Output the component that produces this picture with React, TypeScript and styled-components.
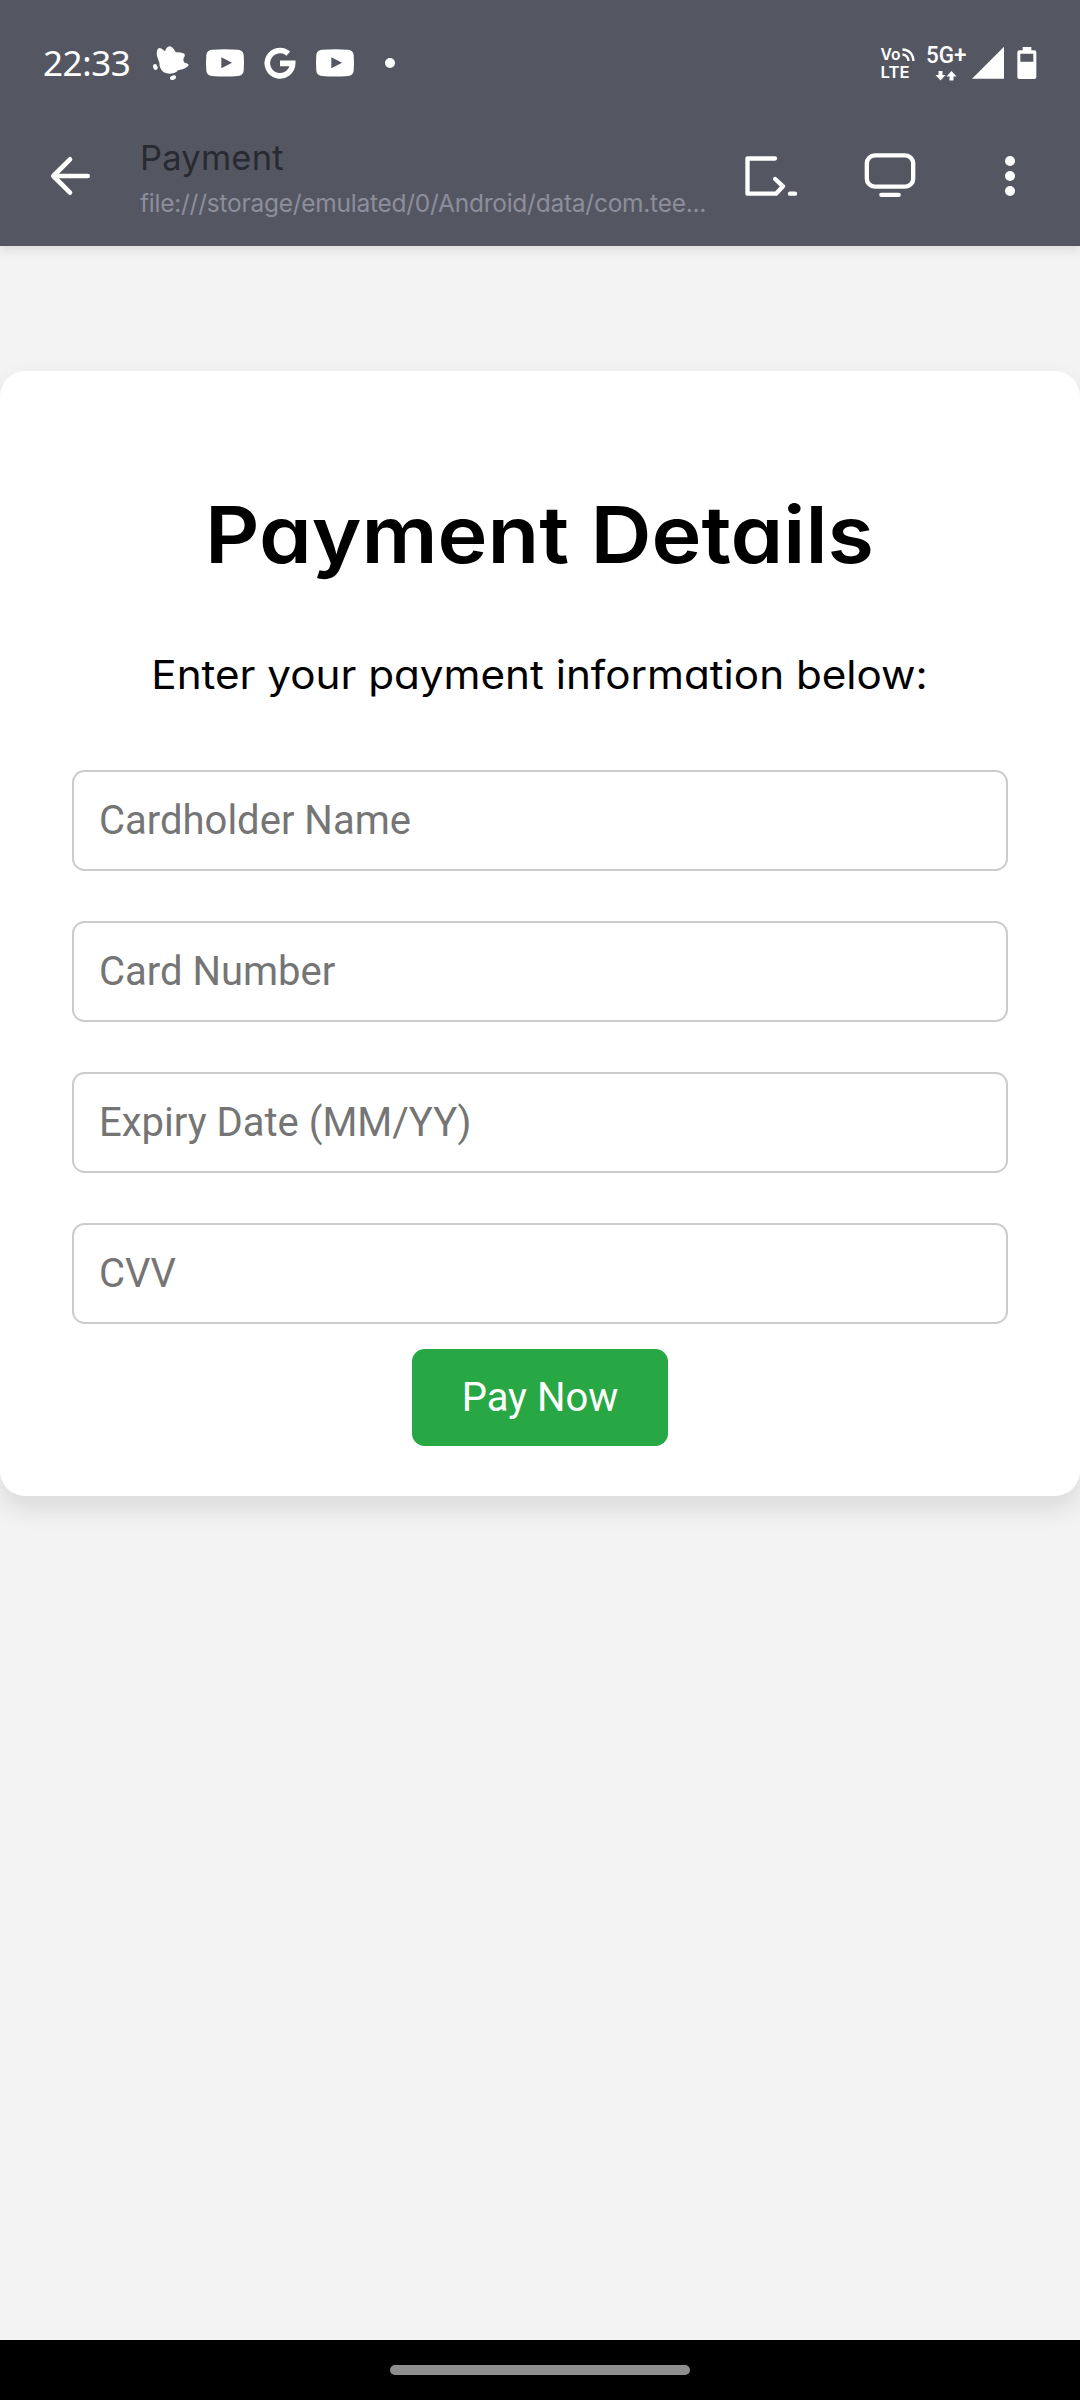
import React from "react";
import styled, { createGlobalStyle } from "styled-components";

const GlobalStyle = createGlobalStyle`
  * { box-sizing: border-box; }
  body { margin: 0; background: #f3f3f3; }
`;

const Screen = styled.div`
  width: 1080px;
  height: 2400px;
  display: flex;
  flex-direction: column;
  background: #f3f3f3;
  overflow: hidden;
`;

const Header = styled.header`
  height: 246px;
  flex: none;
  background: #545762;
  color: #fff;
  box-shadow: 0 2px 12px rgba(0, 0, 0, 0.13);
`;

const StatusBar = styled.div`
  height: 126px;
  display: flex;
  justify-content: space-between;
  align-items: center;
  padding: 0 43px 0 43px;
`;

const StatusGroup = styled.div<{ $gap: number }>`
  display: flex;
  align-items: center;
  gap: ${(p) => p.$gap}px;
`;

const Clock = styled.span`
  width: 90px;
  font: 400 35px/40px "Noto Sans", sans-serif;
  letter-spacing: -0.4px;
  white-space: nowrap;
`;

const Glyph = styled.svg`
  display: block;
  flex: none;
  overflow: visible;
  fill: currentColor;
`;

const LineGlyph = styled(Glyph)`
  fill: none;
  stroke: currentColor;
  stroke-linecap: round;
  stroke-linejoin: round;
`;

const Toolbar = styled.div`
  height: 120px;
  display: flex;
  align-items: center;
  padding: 0 10px 20px 51px;
`;

const IconButton = styled.button`
  display: flex;
  justify-content: center;
  padding: 0;
  border: 0;
  background: none;
  color: #fff;
`;

const PageInfo = styled.div`
  width: 570px;
  height: 100px;
  margin-left: 50px;
  padding-top: 9px;
  font-family: Inter, sans-serif;
  white-space: nowrap;
`;

const PageTitle = styled.div`
  font-size: 34.5px;
  line-height: 46px;
  letter-spacing: 0.2px;
  color: #282a31;
`;

const PageUrl = styled.div`
  font-size: 24.5px;
  line-height: 44px;
  letter-spacing: -0.25px;
  color: #8d8e9b;
`;

const Actions = styled.div`
  flex: 1;
  display: grid;
  grid-template-columns: repeat(3, 1fr);
  align-items: center;
`;

const Content = styled.main`
  flex: 1;
  padding-top: 125px;
`;

const Card = styled.form`
  height: 1125px;
  padding: 103px 72px 50px;
  display: flex;
  flex-direction: column;
  align-items: center;
  background: #fff;
  border-radius: 25px;
  box-shadow: 0 12.5px 25px rgba(0, 0, 0, 0.1);
`;

const Heading = styled.h1`
  margin: 0 0 51px;
  font: 600 79px/120px Inter, sans-serif;
  font-feature-settings: "cv11";
  color: #000;
  white-space: nowrap;
  transform: scaleX(1.07);
`;

const Lead = styled.p`
  margin: 0 0 65px;
  font: 400 39.5px/60px Inter, sans-serif;
  font-feature-settings: "cv11";
  color: #000;
  white-space: nowrap;
  transform: scaleX(1.068);
`;

const Fields = styled.div`
  width: 100%;
  display: grid;
  gap: 50px;
`;

const Field = styled.input`
  width: 100%;
  height: 101px;
  padding: 0 25px;
  border: 2px solid #ccc;
  border-radius: 12.5px;
  background: #fff;
  font: 400 40px Roboto, sans-serif;
  &::placeholder {
    color: #757575;
    opacity: 1;
  }
`;

const PayButton = styled.button`
  width: 256px;
  height: 97px;
  margin-top: 25px;
  padding: 0;
  border: 0;
  border-radius: 12.5px;
  background: #28a745;
  color: #fff;
  font: 400 40px Roboto, sans-serif;
`;

const NavBar = styled.footer`
  height: 60px;
  display: flex;
  align-items: center;
  justify-content: center;
  background: #000;
`;

const NavHandle = styled.div`
  width: 300px;
  height: 10px;
  border-radius: 5px;
  background: #8e8e8e;
`;

const VideoIcon = () => (
  <Glyph width="38" height="28" viewBox="0 0 114 84">
    <path
      fillRule="evenodd"
      d="M18 2Q57 -1 96 2Q111 3 113 17Q115 42 113 66Q111 80 96 81Q57 84 18 81Q3 80 1 66Q-1 42 1 17Q3 3 18 2ZM46 25V58L78 41.500Z"
    />
  </Glyph>
);

const fields = ["Cardholder Name", "Card Number", "Expiry Date (MM/YY)", "CVV"];

export default function App() {
  return (
    <Screen>
      <GlobalStyle />
      <Header>
        <StatusBar>
          <StatusGroup $gap={20}>
            <Clock>22:33</Clock>
            <Glyph width="33" height="36" viewBox="458 75 99 108">
              <path d="M470 92Q473 80 484 86L494 94Q498 80 508 79Q518 80 526 97Q538 95 549 100Q558 104 549 116Q548 122 553 128Q565 130 565 136Q558 146 540 149Q532 149 528 156Q510 166 490 157Q477 146 477 128L470 108Q468 100 470 92Z" />
              <ellipse cx="465" cy="141" rx="6.500" ry="9" transform="rotate(-20 465 141)" />
              <ellipse cx="518" cy="173" rx="9.500" ry="6.500" transform="rotate(-22 518 173)" />
            </Glyph>
            <VideoIcon />
            <Glyph width="32" height="34" viewBox="793 79 96 102">
              <path
                d="M866 102A38 38 0 1 0 879 131H841"
                fill="none"
                stroke="currentColor"
                strokeWidth="17"
              />
            </Glyph>
            <VideoIcon />
            <Glyph width="42" height="10" viewBox="0 0 42 10">
              <circle cx="16" cy="5" r="5" />
            </Glyph>
          </StatusGroup>
          <StatusGroup $gap={0}>
            <Glyph
              width="46"
              height="36"
              viewBox="0 0 46 36"
              fontFamily="Inter, sans-serif"
              fontWeight="600"
              fontSize="16"
            >
              <text x="0.500" y="15" textLength="20" lengthAdjust="spacingAndGlyphs">Vo</text>
              <text x="0.500" y="32.500" textLength="29" lengthAdjust="spacingAndGlyphs">LTE</text>
              <g fill="none" stroke="currentColor" strokeWidth="2.300">
                <path d="M22.500 4.500Q32.500 5 33.500 16" />
                <path d="M22.500 9.500Q28 10 28.500 16" />
              </g>
            </Glyph>
            <Glyph
              width="46"
              height="36"
              viewBox="0 0 46 36"
              fontFamily="Roboto, sans-serif"
              fontWeight="500"
              fontSize="23"
            >
              <text x="0" y="18.300" textLength="40.500" lengthAdjust="spacingAndGlyphs">5G+</text>
              <path d="M12.500 26H16.500V30H19.500L14.500 35.500L9.500 30H12.500Z" />
              <path d="M23.500 35.500H27.500V31.500H30.500L25.500 26L20.500 31.500H23.500Z" />
            </Glyph>
            <Glyph width="45" height="34" viewBox="396 76 135 102">
              <path d="M396 174L492 78V174Z" />
            </Glyph>
            <Glyph width="20" height="34" viewBox="533 77 60 102">
              <path
                fillRule="evenodd"
                d="M550 80H576V90H585Q591 90 591 96V170Q591 176 585 176H540Q534 176 534 170V96Q534 90 540 90H550ZM543 100V124H582V100Z"
              />
            </Glyph>
          </StatusGroup>
        </StatusBar>
        <Toolbar>
          <IconButton type="button" aria-label="Back">
            <LineGlyph width="39" height="40" viewBox="153 108 117 120" strokeWidth="14">
              <path d="M263 168H162M210 118L160 168L210 218" />
            </LineGlyph>
          </IconButton>
          <PageInfo>
            <PageTitle>Payment</PageTitle>
            <PageUrl>file:///storage/emulated/0/Android/data/com.tee...</PageUrl>
          </PageInfo>
          <Actions>
            <IconButton type="button" aria-label="Console">
              <LineGlyph width="56" height="44" viewBox="96 102 168 132" strokeWidth="13">
                <path d="M195 115.500H112.500V221H198L219 199L195.500 177M240 221H255" />
              </LineGlyph>
            </IconButton>
            <IconButton type="button" aria-label="Desktop view">
              <LineGlyph width="52" height="46" viewBox="462 99 156 138" strokeWidth="13">
                <rect x="470.500" y="106" width="139" height="94" rx="24" />
                <path d="M514 224.500H566" />
              </LineGlyph>
            </IconButton>
            <IconButton type="button" aria-label="More">
              <Glyph width="10" height="40" viewBox="0 0 10 40">
                <circle cx="5" cy="5" r="5" />
                <circle cx="5" cy="20" r="5" />
                <circle cx="5" cy="35" r="5" />
              </Glyph>
            </IconButton>
          </Actions>
        </Toolbar>
      </Header>
      <Content>
        <Card>
          <Heading>Payment Details</Heading>
          <Lead>Enter your payment information below:</Lead>
          <Fields>
            {fields.map((name) => (
              <Field key={name} placeholder={name} />
            ))}
          </Fields>
          <PayButton type="button">Pay Now</PayButton>
        </Card>
      </Content>
      <NavBar>
        <NavHandle />
      </NavBar>
    </Screen>
  );
}
